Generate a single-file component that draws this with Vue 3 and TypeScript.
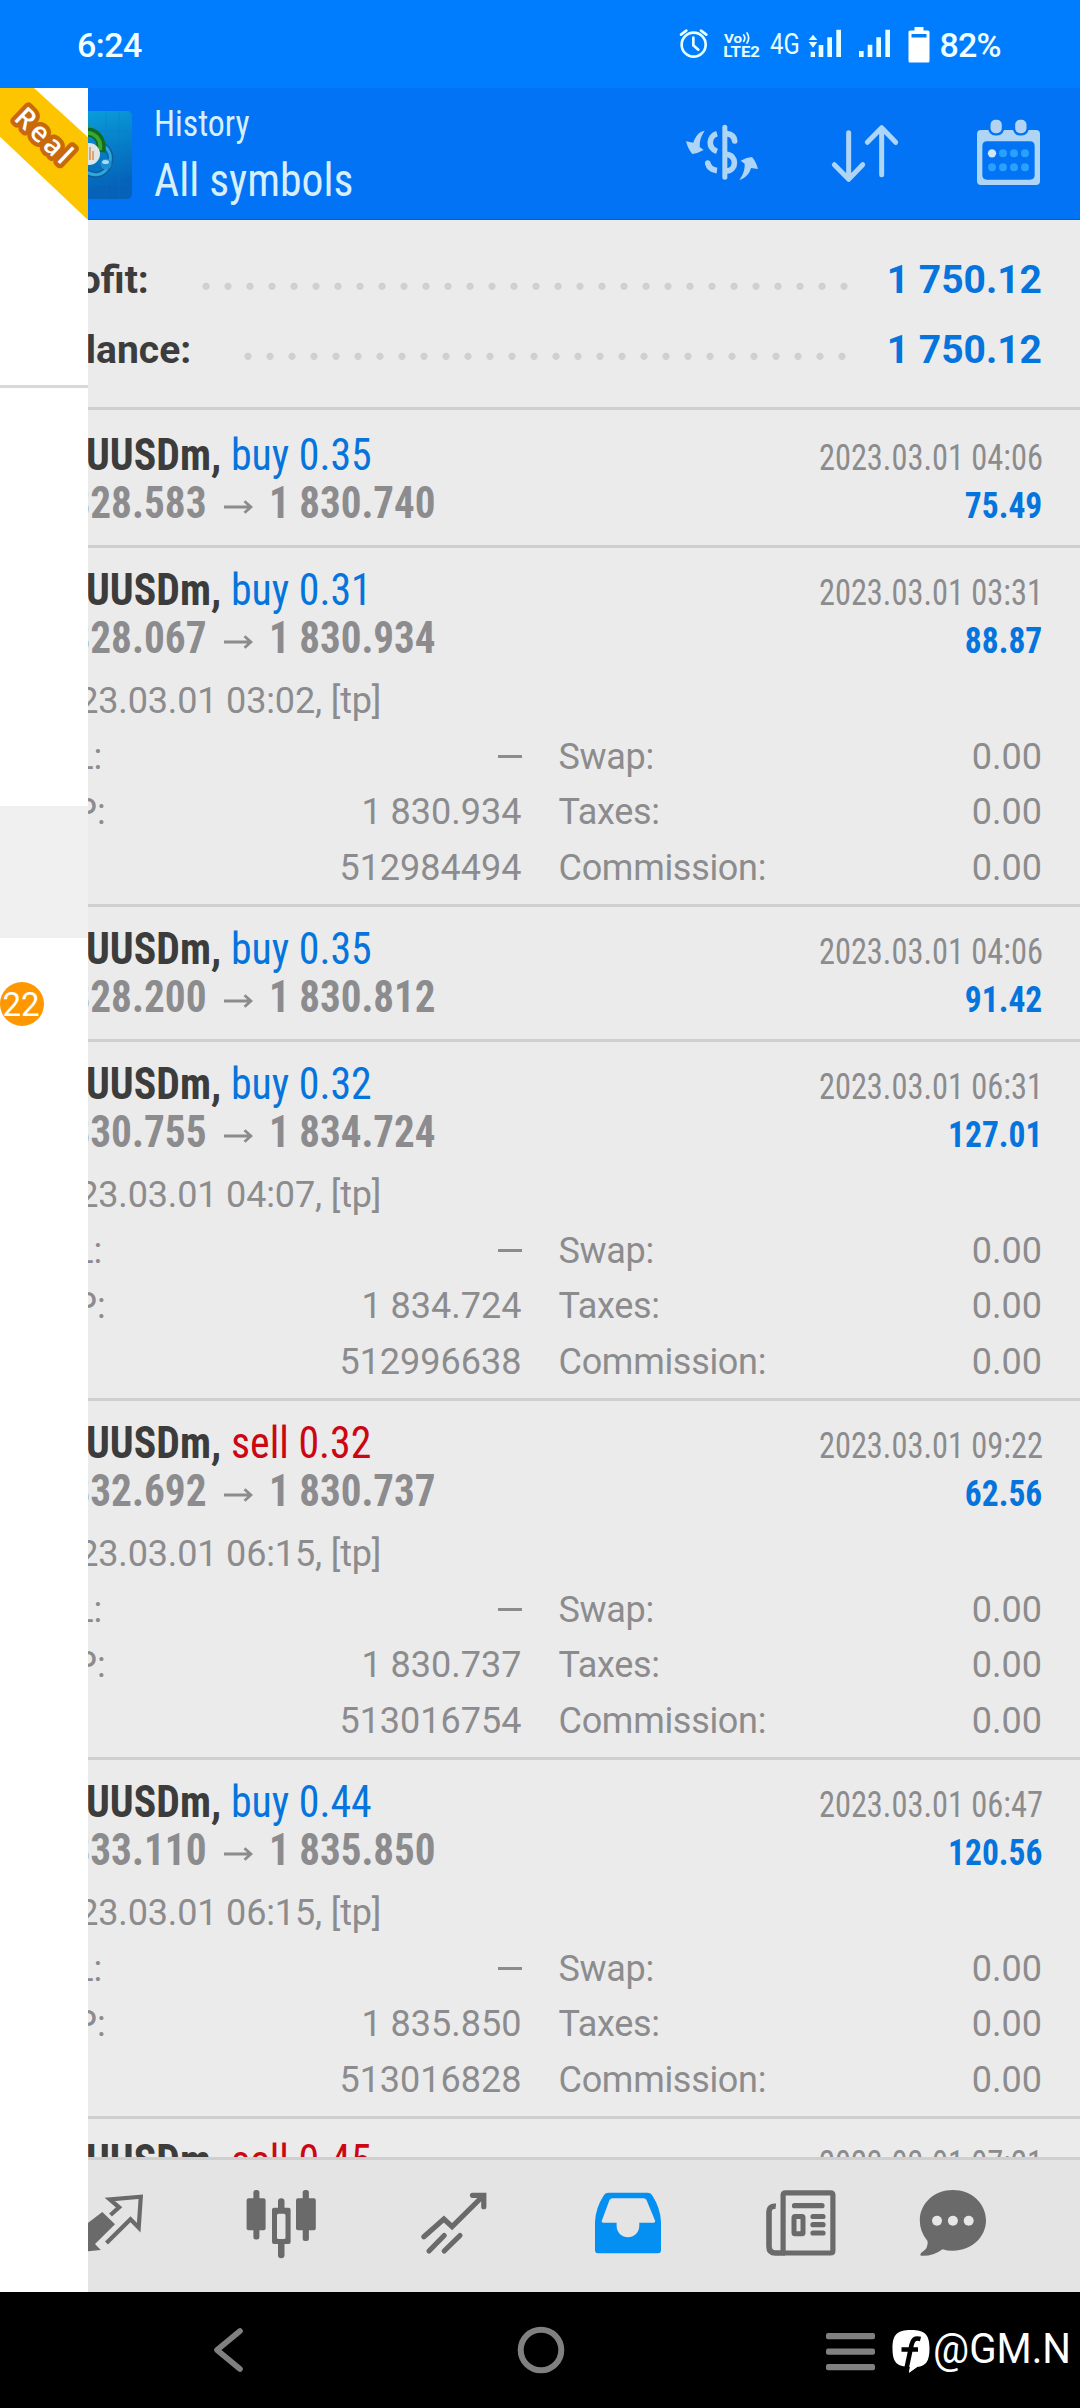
<script setup lang="ts">
interface Deal {
  symbol: string
  side: 'buy' | 'sell'
  volume: string
  open: string
  close: string
  time: string
  profit: string
  comment?: string
  tp?: string
  ticket?: string
}

const summary = [
  { label: 'Profit:', value: '1 750.12', dots: 30 },
  { label: 'Balance:', value: '1 750.12', dots: 28 },
]

const deals: Deal[] = [
  { symbol: 'XAUUSDm,', side: 'buy', volume: '0.35', open: '1 828.583', close: '1 830.740', time: '2023.03.01 04:06', profit: '75.49' },
  { symbol: 'XAUUSDm,', side: 'buy', volume: '0.31', open: '1 828.067', close: '1 830.934', time: '2023.03.01 03:31', profit: '88.87', comment: '2023.03.01 03:02, [tp]', tp: '1 830.934', ticket: '512984494' },
  { symbol: 'XAUUSDm,', side: 'buy', volume: '0.35', open: '1 828.200', close: '1 830.812', time: '2023.03.01 04:06', profit: '91.42' },
  { symbol: 'XAUUSDm,', side: 'buy', volume: '0.32', open: '1 830.755', close: '1 834.724', time: '2023.03.01 06:31', profit: '127.01', comment: '2023.03.01 04:07, [tp]', tp: '1 834.724', ticket: '512996638' },
  { symbol: 'XAUUSDm,', side: 'sell', volume: '0.32', open: '1 832.692', close: '1 830.737', time: '2023.03.01 09:22', profit: '62.56', comment: '2023.03.01 06:15, [tp]', tp: '1 830.737', ticket: '513016754' },
  { symbol: 'XAUUSDm,', side: 'buy', volume: '0.44', open: '1 833.110', close: '1 835.850', time: '2023.03.01 06:47', profit: '120.56', comment: '2023.03.01 06:15, [tp]', tp: '1 835.850', ticket: '513016828' },
  { symbol: 'XAUUSDm,', side: 'sell', volume: '0.45', open: '1 833.402', close: '1 831.204', time: '2023.03.01 07:21', profit: '98.91' },
]
</script>

<template>
  <div class="screen">
    <header class="status">
      <span class="clock">6:24</span>
      <svg class="signals" width="240" height="60" viewBox="0 0 720 180" fill="#e6ffff">
        <g fill="none" stroke="#e6ffff" stroke-width="8" stroke-linecap="round">
          <circle cx="74" cy="89" r="36" />
          <path d="M73 68V91L88 104" />
          <path d="M36 59L52 47M96 47L112 59" />
          <path d="M224 60Q231 69 224 79M234 54Q244 69 234 84" stroke-width="5" />
        </g>
        <text x="165" y="83" font-size="41" font-weight="700" textLength="54" lengthAdjust="spacingAndGlyphs">Vo</text>
        <text x="163" y="126" font-size="44" font-weight="700" textLength="110" lengthAdjust="spacingAndGlyphs">LTE2</text>
        <text x="303" y="117" font-size="86" font-weight="400" textLength="89" lengthAdjust="spacingAndGlyphs">4G</text>
        <path d="M432 59L445 75H419ZM419 81H445L432 98Z" />
        <path d="M425 110h13v16h-13zM449 90h14v36h-14zM475 67h14v59h-14zM502 44h14v82h-14z" />
        <path d="M570 108h14v18h-14zM596 89h14v37h-14zM622 67h14v59h-14zM649 44h14v82h-14z" />
      </svg>
      <svg class="battery" width="22" height="36" viewBox="0 0 22 36">
        <path fill="#fff" d="M6.500 0h9v3.500H20a1.500 1.500 0 0 1 1.500 1.500v29a1.500 1.500 0 0 1-1.500 1.500H2A1.500 1.500 0 0 1 .5 34V5A1.500 1.500 0 0 1 2 3.500h4.500z" />
        <path fill="#007cfe" d="M3.500 7h15v3.500h-15z" />
      </svg>
      <span class="percent">82%</span>
    </header>

    <section class="toolbar">
      <svg class="app-icon" width="88" height="88" viewBox="0 0 88 88">
        <defs>
          <linearGradient id="tile" x1="0" y1="0" x2="0.3" y2="1">
            <stop offset="0" stop-color="#0aa7e0" />
            <stop offset="0.5" stop-color="#0783cc" />
            <stop offset="1" stop-color="#0562b8" />
          </linearGradient>
        </defs>
        <rect width="88" height="88" rx="5" fill="url(#tile)" />
        <path d="M62 0V88M75 0V88M0 20H88M0 35H88M0 73H88" stroke="#0a78c4" stroke-width="0.6" opacity="0.5" />
        <path d="M56 33C66 37 69 46 64 56C59 65 49 66 41 60" fill="none" stroke="#0b5f9d" stroke-width="6" />
        <path d="M56 33C66 37 69 46 64 56C59 65 49 66 41 60" fill="none" stroke="#2fa6dc" stroke-width="3" />
        <circle cx="44" cy="20" r="5" fill="#2f9a30" />
        <path d="M40 22C50 19 59 27 57 41" fill="none" stroke="#126b1c" stroke-width="9" />
        <path d="M42 22C50 21 58 28 56 39" fill="none" stroke="#37a836" stroke-width="4" />
        <circle cx="45" cy="43" r="11" fill="#dfe5e2" />
        <path d="M43 49V42M46 49V36M49 49V40" stroke="#d9a578" stroke-width="2" />
        <circle cx="62" cy="53" r="5.500" fill="#1f8fd0" />
        <ellipse cx="61.500" cy="51" rx="3.500" ry="2" fill="#a8dcf4" />
      </svg>
      <div class="titles">
        <div class="sub"><span>History</span></div>
        <div class="main"><span>All symbols</span></div>
      </div>
      <div class="actions">
        <svg width="84" height="76" viewBox="60 72 252 228" fill="#aed4f6">
          <path d="M134 122C118 124 106 138 100 158L78 154Q84 178 97 192Q114 190 131 180L119 171C118 152 124 136 134 122Z" />
          <path d="M238 270C256 264 268 252 273 234L294 237Q288 214 276 201Q260 202 242 212L254 221C255 240 248 256 238 270Z" />
          <g fill="none" stroke="#aed4f6" stroke-width="17">
            <path d="M171 131C146 138 142 174 171 184" />
            <path d="M200 131C216 133 223 142 224 153" stroke-linecap="round" />
            <path d="M200 193C231 196 231 240 200 243" />
            <path d="M143 219C146 232 156 240 171 242" />
            <path d="M194.500 112V262" stroke-width="15" stroke-linecap="round" />
          </g>
          <circle cx="143" cy="219" r="8" />
        </svg>
        <svg width="76" height="76" viewBox="504 72 228 228" fill="none" stroke="#aed4f6" stroke-width="15" stroke-linecap="round" stroke-linejoin="round">
          <path d="M566 128V266M523 224L566 268L608 224" />
          <path d="M665 254V114M622 157L665 113L707 157" />
        </svg>
        <svg width="70" height="76" viewBox="942 72 210 228">
          <path fill="#aed4f6" fill-rule="evenodd" d="M963 120H1128Q1140 120 1140 132V273Q1140 285 1128 285H963Q951 285 951 273V132Q951 120 963 120ZM981 154Q967 154 967 168V255Q967 269 981 269H1110Q1124 269 1124 255V168Q1124 154 1110 154Z" />
          <g fill="#b4d2f2" stroke="#0273f4" stroke-width="7">
            <rect x="988" y="86" width="41" height="47" rx="18" />
            <rect x="1062" y="86" width="41" height="47" rx="18" />
          </g>
          <g fill="#2aa0ff">
            <circle cx="996" cy="190" r="12.500" fill="#cfe6fb" />
            <circle v-for="x in [1029, 1062, 1095]" :key="x" :cx="x" cy="190" r="12" />
            <circle v-for="x in [996, 1029, 1062, 1095]" :key="'b' + x" :cx="x" cy="232" r="12" />
          </g>
        </svg>
      </div>
    </section>

    <main class="content">
      <section class="summary">
        <div v-for="s in summary" :key="s.label" class="sum-row">
          <span class="sum-label">{{ s.label }}</span>
          <span class="dots" :style="{ width: s.dots * 22 + 'px' }"></span>
          <span class="sum-value">{{ s.value }}</span>
        </div>
      </section>

      <article v-for="(d, i) in deals" :key="i" class="deal" :class="{ open: d.comment }">
        <div class="line">
          <span class="left"><b class="symbol">{{ d.symbol }}</b><span class="side" :class="d.side">{{ d.side }} {{ d.volume }}</span></span>
          <span class="time">{{ d.time }}</span>
        </div>
        <div class="line">
          <span class="left prices">
            <b class="from">{{ d.open }}</b>
            <svg width="29" height="14" viewBox="0 0 29 14" fill="none" stroke="#8c8c8e" stroke-width="2.800"><path d="M0 7H27M20.500 1.200L27 7L20.500 12.800" /></svg>
            <b class="to">{{ d.close }}</b>
          </span>
          <b class="profit">{{ d.profit }}</b>
        </div>
        <template v-if="d.comment">
          <div class="comment">{{ d.comment }}</div>
          <div class="grid">
            <span>S/L:</span><span class="num"><i class="dash"></i></span><span class="key">Swap:</span><span class="num">0.00</span>
            <span>T/P:</span><span class="num">{{ d.tp }}</span><span class="key">Taxes:</span><span class="num">0.00</span>
            <span>ID:</span><span class="num">{{ d.ticket }}</span><span class="key">Commission:</span><span class="num">0.00</span>
          </div>
        </template>
      </article>
    </main>

    <nav class="tabs">
      <div class="tab">
        <svg width="80" height="80" viewBox="0 0 80 80">
          <path d="M42.500 31L51.100 23.300L41.800 15.300L72.800 12.700L70.700 43.700L62.500 35.300L38.500 59" fill="none" stroke="#6a6a6a" stroke-width="4.200" />
          <path d="M34.300 28L47 40.300L27 60L32.800 66L2 69L4 37L12 45Z" fill="#6a6a6a" />
        </svg>
      </div>
      <div class="tab">
        <svg width="80" height="80" viewBox="0 0 80 80" fill="#6a6a6a">
          <rect x="5.600" y="14.300" width="19" height="32" rx="2" />
          <rect x="12.400" y="6" width="6" height="49.500" rx="2.500" />
          <path fill-rule="evenodd" d="M33 23.700H47.600Q49.600 23.700 49.600 25.700V58Q49.600 60 47.600 60H33Q31 60 31 58V25.700Q31 23.700 33 23.700ZM37.500 29.700Q36 29.700 36 31.200V53.500Q36 55 37.500 55H43Q44.500 55 44.500 53.500V31.200Q44.500 29.700 43 29.700Z" />
          <path d="M37 24V17.500a3.200 3.200 0 0 1 6.500 0V24zM37 59.500V71a3.200 3.200 0 0 0 6.500 0V59.500z" />
          <rect x="55" y="14.300" width="19.800" height="32" rx="2" />
          <rect x="61.700" y="6" width="6.200" height="51" rx="2.500" />
        </svg>
      </div>
      <div class="tab">
        <svg width="80" height="80" viewBox="0 0 80 80" fill="none" stroke="#6a6a6a" stroke-width="5.200" stroke-linecap="round">
          <path d="M9.900 52.700L29.900 35L38.100 42.700L69 12M58.500 11.300H69.800V22.700M15 67L30.200 51.500M30.200 67L46 51.500" />
        </svg>
      </div>
      <div class="tab">
        <svg width="80" height="80" viewBox="0 0 80 80">
          <path fill="#0490f2" fill-rule="evenodd" d="M20.500 8.700H59.500Q62.500 8.700 64 11Q72.500 24 73 38V66Q73 69.200 70 69.200H10Q7 69.200 7 66V38Q7.500 24 16 11Q17.500 8.700 20.500 8.700ZM24.500 14.300Q22.500 14.300 21.500 16L13.900 36.500Q13.200 38.700 15.500 38.700H28.600V41.500C28.600 57 51.300 57 51.300 41.500V38.700H65.500Q67.600 38.700 67 36.500L58.500 16Q57.700 14.300 55.500 14.300Z" />
        </svg>
      </div>
      <div class="tab">
        <svg width="80" height="80" viewBox="0 0 80 80" fill="none" stroke="#6a6a6a">
          <path d="M24.600 8.800H69.400Q71.900 8.800 71.900 11.300V66.400Q71.900 69 69.400 69H24.600Q22.100 69 22.100 66.400V11.300Q22.100 8.800 24.600 8.800Z" stroke-width="5.200" />
          <path d="M14.800 22.300Q8 21.500 8 28.500V62.500Q8 69 14.500 69H24" stroke-width="5.600" />
          <path d="M33.500 21.700H61M52 32.500H62M52 40.700H62M52 49H62" stroke-width="5.200" stroke-linecap="round" />
          <rect x="33" y="32.400" width="9" height="17.300" rx="1" stroke-width="5" />
        </svg>
      </div>
      <div class="tab last">
        <svg width="80" height="80" viewBox="0 0 80 80" fill="#6a6a6a">
          <path d="M39.900 6C58.500 6 73 19.300 73 36.300S58.500 66.700 39.900 66.700Q34 66.700 29.500 65.200Q20 72.500 8 71.800Q6.500 71 8 69Q16 64 14.500 57Q6.800 48 6.800 36.300C6.800 19.300 21.300 6 39.900 6Z" />
          <g fill="#e6e6e6"><circle cx="24" cy="36.700" r="5" /><circle cx="39.900" cy="36.700" r="5" /><circle cx="55.700" cy="36.700" r="5" /></g>
        </svg>
      </div>
    </nav>

    <footer class="system">
      <svg class="back" width="40" height="50" viewBox="0 0 40 50" fill="none" stroke="#808080" stroke-width="5.600" stroke-linecap="round" stroke-linejoin="round"><path d="M29 6L6 25L29 44" /></svg>
      <svg class="home" width="48" height="48" viewBox="0 0 48 48" fill="none" stroke="#808080" stroke-width="6"><circle cx="24" cy="24" r="20.300" /></svg>
      <svg class="recent" width="49" height="38" viewBox="0 0 49 38" fill="#808080"><rect width="49" height="6.200" rx="2" /><rect y="15.500" width="49" height="6.200" rx="2" /><rect y="31" width="49" height="6.200" rx="2" /></svg>
      <svg class="logo" width="38" height="43" viewBox="0 0 38 43">
        <path fill="#fff" d="M19 0C33 0 37.500 4.500 37.500 18.500C37.500 31 34 36.200 25 37L17 42.700L17.800 37C4.500 36.500 0.500 32 0.500 18.500C0.500 4.500 5 0 19 0Z" />
        <path fill="none" stroke="#000" stroke-width="4.600" d="M28.500 9C22.500 7.500 20.500 10 19.500 15L14.500 38.500M9.500 19.500H26" />
        <path fill="#fff" d="M19.500 32L17 42.700L25 37Z" />
      </svg>
      <span class="handle">@GM.N</span>
    </footer>

    <aside class="drawer">
      <div class="account">
        <svg width="88" height="132" viewBox="0 12 264 396">
          <path fill="#fdc500" d="M0 12H102L264 160V408L0 158Z" />
          <text x="0" y="0" transform="translate(38 106) rotate(43.500)" font-size="83" font-weight="600" textLength="202" fill="#fff" stroke="#c8690c" stroke-width="26" stroke-linejoin="round" paint-order="stroke">Real</text>
        </svg>
      </div>
      <div class="gap"></div>
      <div class="selected"></div>
      <span class="badge">22</span>
    </aside>
  </div>
</template>

<style>
body { margin: 0; background: #000; }
</style>

<style scoped>
.screen {
  position: relative;
  display: flex;
  flex-direction: column;
  width: 1080px;
  height: 2408px;
  overflow: hidden;
  background: #ebebeb;
  font-family: Roboto, "Liberation Sans", sans-serif;
  color: #8c8c8e;
}
svg { display: block; flex: none; }

.status {
  display: flex;
  flex: none;
  height: 88px;
  background: #007cfe;
  color: #f0ffff;
  font-size: 34px;
  font-weight: 500;
  line-height: 91px;
}
.clock { width: 592px; padding-left: 77px; letter-spacing: -0.5px; }
.signals { margin-top: 15px; }
.battery { margin: 26.500px 10px 0 -1.500px; }
.percent { letter-spacing: -0.8px; }

.toolbar {
  display: flex;
  flex: none;
  height: 131px;
  background: #0273f4;
  border-bottom: 1px solid #0360c4;
  color: #d6effb;
  font-stretch: 75%;
}
.app-icon { margin: 23px 22px 0 44px; }
.titles { display: flex; flex-direction: column; padding-top: 15px; }
.titles span { display: inline-block; transform-origin: 0 50%; white-space: nowrap; }
.sub { height: 42px; font-size: 36px; line-height: 42px; }
.sub span { transform: scaleX(0.94); }
.main { height: 70px; font-size: 47px; line-height: 70px; }
.main span { transform: scaleX(0.928); }
.actions { display: flex; margin: 26px 36px 0 auto; }
.actions svg + svg { margin-left: 64px; }
.actions svg:last-child { margin-left: 70px; }

.content { flex: none; height: 1937px; overflow: hidden; }
.summary { box-sizing: border-box; height: 187px; padding: 25px 38px 0 40px; }
.sum-row {
  display: flex;
  height: 70px;
  font-size: 39px;
  font-weight: 700;
  line-height: 70px;
}
.sum-label { color: #3c3c3c; }
.dots {
  margin-left: 46px;
  background: radial-gradient(circle at 11px 41.300px, #d0d0d0 3.200px, transparent 4px) 0 0 / 22px 70px repeat-x;
}
.sum-value { margin-left: auto; color: #0674dd; }

.deal {
  box-sizing: border-box;
  height: 135px;
  padding: 18px 38px 0 38px;
  border-top: 3px solid #cfcfcf;
}
.deal.open { height: 359px; }
.summary + .deal { height: 138px; padding-top: 21px; }
.line {
  display: flex;
  align-items: baseline;
  justify-content: space-between;
  height: 48px;
  font-size: 44px;
  line-height: 48px;
  font-stretch: 75%;
  white-space: nowrap;
}
.left { display: flex; align-items: baseline; }
.symbol { width: 193px; color: #3c3c3c; transform: scaleX(0.95); transform-origin: 0 50%; }
.side { transform: scaleX(0.95); transform-origin: 0 50%; }
.buy { color: #0674dd; }
.sell { color: #cc0612; }
.from { width: 186px; transform: scaleX(0.938); transform-origin: 168px 50%; text-indent: -10px; }
.prices svg { align-self: center; margin-top: 8px; }
.to { margin-left: 16px; transform: scaleX(0.933); transform-origin: 0 50%; }
.time { font-size: 36px; transform: scaleX(0.9); transform-origin: 100% 50%; margin-right: -1px; }
.profit { font-size: 36px; color: #0674dd; transform: scaleX(0.93); transform-origin: 100% 50%; }
.comment { margin-top: 16px; height: 46px; font-size: 36px; line-height: 46px; letter-spacing: -0.15px; }
.grid {
  display: grid;
  grid-template-columns: 120px 363.500px 1fr 180px;
  grid-auto-rows: 55.600px;
  margin-top: 5.500px;
  font-size: 36px;
  line-height: 55.600px;
}
.num { text-align: right; }
.key { padding-left: 37px; letter-spacing: -0.3px; }
.dash { display: inline-block; width: 24px; height: 3px; background: #8c8c8e; vertical-align: 11px; }

.tabs {
  display: flex;
  flex: none;
  box-sizing: border-box;
  height: 135px;
  padding-left: 21px;
  border-top: 3px solid #cfcfcf;
  background: #e4e4e4;
}
.tab { display: flex; flex: none; justify-content: center; width: 173.330px; padding-top: 24px; }
.tab.last { margin-left: -21px; }

.system { display: flex; flex: none; height: 116px; background: #000; }
.back { margin: 33px 0 0 210.500px; }
.home { margin: 34px 0 0 266px; }
.recent { margin: 41px 0 0 261px; }
.logo { margin: 38px 0 0 17.500px; }
.handle {
  margin-left: 3px;
  color: #fff;
  font-size: 42px;
  font-weight: 400;
  line-height: 113px;
  transform: scaleX(0.958);
  transform-origin: 0 50%;
}

.drawer {
  position: absolute;
  top: 88px;
  left: 0;
  width: 88px;
  height: 2204px;
  overflow: hidden;
  background: #fff;
}
.account { height: 297px; border-bottom: 3px solid #d9d9d9; font-family: "Open Sans", "Noto Sans", sans-serif; }
.gap { height: 418px; }
.selected { height: 132px; background: #f0f0f0; }
.badge {
  display: block;
  width: 44px;
  height: 44px;
  margin-top: 44px;
  border-radius: 50%;
  background: #ff9800;
  color: #fff;
  font-size: 33px;
  line-height: 45px;
  text-align: center;
  text-indent: -2px;
}
</style>
